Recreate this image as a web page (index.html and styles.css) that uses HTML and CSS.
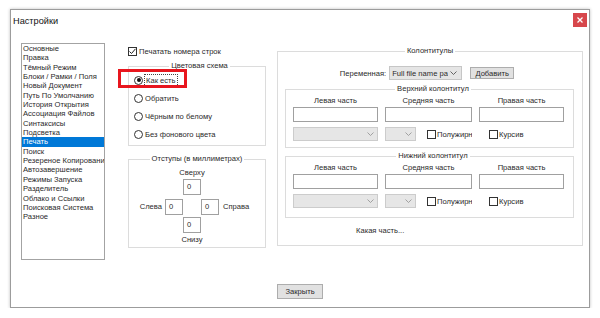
FILE: index.html
```html
<!DOCTYPE html>
<html lang="ru">
<head>
<meta charset="utf-8">
<title>Настройки</title>
<link rel="stylesheet" href="styles.css">
</head>
<body>
<div class="window">
  <div class="titlebar">
    <span class="title">Настройки</span>
    <span class="close"><svg width="6" height="6" viewBox="0 0 6 6"><path d="M0.5 0.5L5.5 5.5M5.5 0.5L0.5 5.5" stroke="#fff" stroke-width="1.3"/></svg></span>
  </div>
  <div class="content">
    <ul class="list">
      <li>Основные</li>
      <li>Правка</li>
      <li>Тёмный Режим</li>
      <li>Блоки / Рамки / Поля</li>
      <li>Новый Документ</li>
      <li>Путь По Умолчанию</li>
      <li>История Открытия</li>
      <li>Ассоциация Файлов</li>
      <li>Синтаксисы</li>
      <li>Подсветка</li>
      <li class="sel">Печать</li>
      <li>Поиск</li>
      <li>Резереное Копирование</li>
      <li>Автозавершение</li>
      <li>Режимы Запуска</li>
      <li>Разделитель</li>
      <li>Облако и Ссылки</li>
      <li>Поисковая Система</li>
      <li>Разное</li>
    </ul>

    <div class="col-mid">
      <div class="check-row">
        <span class="cb"><svg width="9" height="9" viewBox="0 0 9 9"><path d="M1.5 4.5L3.5 6.5L7.5 1.8" fill="none" stroke="#222" stroke-width="1"/></svg></span>
        <span>Печатать номера строк</span>
      </div>

      <fieldset class="group scheme">
        <legend>Цветовая схема</legend>
        <div class="radio-row">
          <span class="radio on"></span><span class="focus">Как есть</span>
          <span class="mark"></span>
        </div>
        <div class="radio-row"><span class="radio"></span><span>Обратить</span></div>
        <div class="radio-row"><span class="radio"></span><span>Чёрным по белому</span></div>
        <div class="radio-row"><span class="radio"></span><span>Без фонового цвета</span></div>
      </fieldset>

      <fieldset class="group margins">
        <legend>Отступы (в миллиметрах)</legend>
        <div class="cross">
          <span class="lbl l-top">Сверху</span>
          <span class="num n-top">0</span>
          <span class="lbl l-left">Слева</span>
          <span class="num n-left">0</span>
          <span class="num n-right">0</span>
          <span class="lbl l-right">Справа</span>
          <span class="num n-bottom">0</span>
          <span class="lbl l-bottom">Снизу</span>
        </div>
      </fieldset>
    </div>

    <div class="col-right">
      <fieldset class="group hf">
        <legend>Колонтитулы</legend>
        <div class="var-row">
          <span>Переменная:</span>
          <span class="select var"><span class="sel-text">Full file name pa</span><svg class="chev" width="7" height="4" viewBox="0 0 7 4"><path d="M0.5 0.5L3.5 3.5L6.5 0.5" fill="none" stroke="#555" stroke-width="0.9"/></svg></span>
          <span class="btn add">Добавить</span>
        </div>

        <fieldset class="group sub upper">
          <legend>Верхний колонтитул</legend>
          <div class="parts">
            <span class="plabel">Левая часть</span>
            <span class="plabel">Средняя часть</span>
            <span class="plabel">Правая часть</span>
            <span class="field"></span>
            <span class="field"></span>
            <span class="field"></span>
            <span class="combo"><svg class="chev" width="7" height="4" viewBox="0 0 7 4"><path d="M0.5 0.5L3.5 3.5L6.5 0.5" fill="none" stroke="#999" stroke-width="0.9"/></svg></span>
            <div class="opts">
              <span class="combo small"><svg class="chev" width="7" height="4" viewBox="0 0 7 4"><path d="M0.5 0.5L3.5 3.5L6.5 0.5" fill="none" stroke="#999" stroke-width="0.9"/></svg></span>
              <span class="cb opt-bold"></span><span class="opt-text">Полужирный</span>
            </div>
            <div class="opts italic">
              <span class="cb"></span><span class="opt-text">Курсив</span>
            </div>
          </div>
        </fieldset>

        <fieldset class="group sub lower">
          <legend>Нижний колонтитул</legend>
          <div class="parts">
            <span class="plabel">Левая часть</span>
            <span class="plabel">Средняя часть</span>
            <span class="plabel">Правая часть</span>
            <span class="field"></span>
            <span class="field"></span>
            <span class="field"></span>
            <span class="combo"><svg class="chev" width="7" height="4" viewBox="0 0 7 4"><path d="M0.5 0.5L3.5 3.5L6.5 0.5" fill="none" stroke="#999" stroke-width="0.9"/></svg></span>
            <div class="opts">
              <span class="combo small"><svg class="chev" width="7" height="4" viewBox="0 0 7 4"><path d="M0.5 0.5L3.5 3.5L6.5 0.5" fill="none" stroke="#999" stroke-width="0.9"/></svg></span>
              <span class="cb opt-bold"></span><span class="opt-text">Полужирный</span>
            </div>
            <div class="opts italic">
              <span class="cb"></span><span class="opt-text">Курсив</span>
            </div>
          </div>
        </fieldset>

        <div class="which">Какая часть...</div>
      </fieldset>
    </div>
  </div>
  <div class="footer"><span class="btn close-btn">Закрыть</span></div>
</div>
</body>
</html>
```

FILE: styles.css
```css
html, body {
  margin: 0;
  background: #fff;
}
body {
  font-family: "Liberation Sans", Arial, sans-serif;
  font-size: 7.6px;
  color: #2a2a2a;
}
.window {
  box-sizing: border-box;
  margin: 9px 0 0 10px;
  width: 580px;
  height: 299px;
  border: 1px solid #9c9c9c;
  background: #fff;
  box-shadow: 0 0 3px rgba(0, 0, 0, 0.25);
  display: flex;
  flex-direction: column;
}
.titlebar {
  height: 22px;
  display: flex;
  justify-content: space-between;
  align-items: center;
  padding: 0 2px;
}
.title {
  font-size: 9.2px;
  color: #111;
}
.close {
  align-self: flex-start;
  margin-top: 3px;
  width: 14px;
  height: 14px;
  background: #d7474c;
  display: flex;
  align-items: center;
  justify-content: center;
}
.content {
  display: flex;
  padding: 11px 0 0 10px;
}
.list {
  box-sizing: border-box;
  width: 84px;
  height: 217px;
  margin: 0;
  padding: 0;
  list-style: none;
  border: 1px solid #a3a3a3;
  overflow: hidden;
}
.list li {
  height: 9.35px;
  line-height: 9.35px;
  padding-left: 1px;
  white-space: nowrap;
  overflow: hidden;
}
.list li.sel {
  background: #0078d7;
  color: #fff;
}
.col-mid {
  width: 138px;
  margin-left: 23px;
  margin-top: 3px;
}
.check-row {
  display: flex;
  align-items: center;
  gap: 2px;
  height: 10px;
}
.cb {
  box-sizing: border-box;
  width: 9px;
  height: 9px;
  border: 1px solid #333;
  background: #fff;
  flex: none;
  display: flex;
  align-items: center;
  justify-content: center;
}
.cb svg {
  flex: none;
}
.group {
  margin: 0;
  padding: 0;
  border: 1px solid #dcdcdc;
  min-width: 0;
}
.group legend {
  margin: 0 auto;
  padding: 0 2px;
  line-height: 10px;
  font-size: 7.6px;
}
.scheme {
  margin-top: 5px;
  padding: 0 0 2px 5px;
}
.radio-row {
  position: relative;
  display: flex;
  align-items: center;
  gap: 2px;
  height: 18px;
}
.radio {
  box-sizing: border-box;
  position: relative;
  width: 9px;
  height: 9px;
  border: 1px solid #333;
  border-radius: 50%;
  flex: none;
}
.radio.on::after {
  content: "";
  position: absolute;
  inset: 1.5px;
  border-radius: 50%;
  background: #111;
}
.focus {
  outline: 1px dotted #444;
  padding: 1px 1px;
}
.mark {
  position: absolute;
  left: -16px;
  top: -2px;
  width: 69px;
  height: 19px;
  box-sizing: border-box;
  border: 3px solid #e8161e;
}
.margins {
  margin-top: 8px;
  padding: 4px 0 2px 0;
}
.cross {
  display: grid;
  grid-template-columns: 36px 18px 18px 18px 1fr;
  grid-template-rows: 10px 17px 20px 18px 12px;
}
.lbl {
  line-height: 10px;
  align-self: end;
}
.l-top {
  grid-column: 2 / 5;
  grid-row: 1;
  text-align: center;
}
.l-bottom {
  grid-column: 2 / 5;
  grid-row: 5;
  text-align: center;
}
.l-left {
  grid-column: 1;
  grid-row: 3;
  justify-self: end;
  margin-right: 3px;
  align-self: center;
  margin-top: 3px;
}
.l-right {
  grid-column: 5;
  grid-row: 3;
  margin-left: 4px;
  align-self: center;
  margin-top: 3px;
}
.num {
  box-sizing: border-box;
  height: 16px;
  width: 18px;
  border: 1px solid #a0a0a0;
  padding: 2px 0 0 3px;
  line-height: 10px;
  align-self: end;
}
.n-top { grid-column: 3; grid-row: 2; }
.n-left { grid-column: 2; grid-row: 3; }
.n-right { grid-column: 4; grid-row: 3; }
.n-bottom { grid-column: 3; grid-row: 4; }
.col-right {
  width: 306px;
  margin-left: 11px;
  margin-top: 3px;
}
.hf {
  padding: 0 0 9px 0;
}
.var-row {
  display: flex;
  justify-content: center;
  align-items: center;
  height: 14px;
  margin-top: 10px;
  padding-right: 6px;
}
.select {
  box-sizing: border-box;
  display: flex;
  align-items: center;
  justify-content: space-between;
}
.var {
  width: 73px;
  height: 14px;
  margin-left: 3px;
  padding: 0 4px 0 2px;
  background: #e5e5e5;
  border: 1px solid #c6c6c6;
  white-space: nowrap;
  overflow: hidden;
}
.sel-text {
  overflow: hidden;
}
.chev {
  flex: none;
}
.btn {
  box-sizing: border-box;
  display: flex;
  align-items: center;
  justify-content: center;
  background: #e1e1e1;
  border: 1px solid #adadad;
}
.add {
  width: 44px;
  height: 12px;
  margin-left: 8px;
}
.sub {
  padding: 2px 0 6px 7px;
  margin: 4px 8px 0 7px;
}
.lower {
  margin-top: 3px;
  padding-bottom: 9px;
}
.parts {
  display: grid;
  grid-template-columns: 85px 87px 85px;
  column-gap: 7px;
}
.plabel {
  height: 10px;
  line-height: 10px;
  text-align: center;
}
.field {
  box-sizing: border-box;
  height: 15px;
  margin-top: 1px;
  border: 1px solid #a0a0a0;
  background: #fff;
}
.combo {
  box-sizing: border-box;
  height: 14px;
  margin-top: 5px;
  background: #e6e6e6;
  border: 1px solid #cccccc;
  display: flex;
  align-items: center;
  justify-content: flex-end;
  padding-right: 3px;
}
.opts {
  display: flex;
  align-items: center;
  margin-top: 5px;
  height: 14px;
  overflow: hidden;
  white-space: nowrap;
}
.opts .combo.small {
  width: 31px;
  margin-top: 0;
  flex: none;
}
.opt-bold {
  margin-left: 11px;
}
.opt-text {
  margin-left: 1px;
}
.italic {
  padding-left: 10px;
}
.which {
  margin: 8px 0 0 78px;
  height: 10px;
  line-height: 10px;
}
.footer {
  display: flex;
  justify-content: center;
  margin-top: 24px;
}
.close-btn {
  width: 46px;
  height: 15px;
}
```
